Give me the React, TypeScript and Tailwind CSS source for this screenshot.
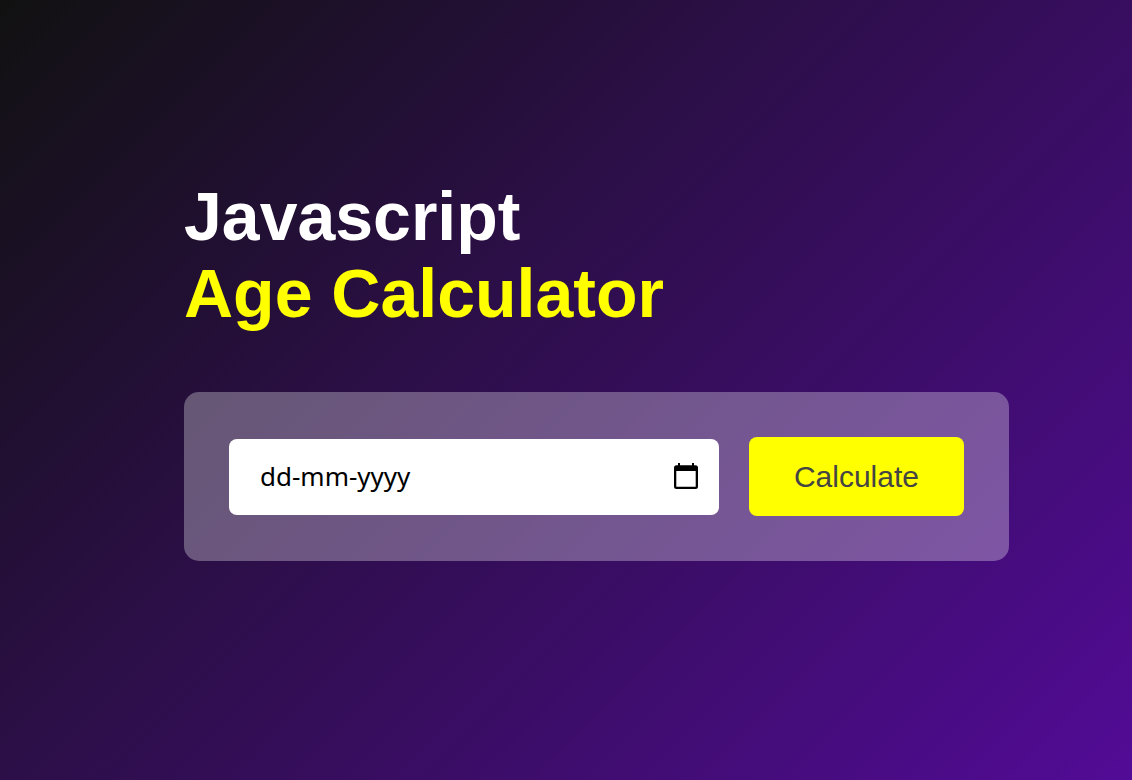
import { useState, type FormEvent } from "react";

function CalendarIcon() {
  return (
    <svg viewBox="0 0 24 26" className="h-[26px] w-6" aria-hidden="true">
      <path
        fill="currentColor"
        fillRule="evenodd"
        d="M4 0h2v2.200h12V0h2v2.200h1.500A2.500 2.500 0 0 1 24 4.700v18.800a2.500 2.500 0 0 1-2.500 2.500h-19A2.500 2.500 0 0 1 0 23.500V4.700a2.500 2.500 0 0 1 2.500-2.500H4zM2.300 8v15.700h19.400V8z"
      />
    </svg>
  );
}

export default function App() {
  const [date, setDate] = useState("");

  const handleSubmit = (event: FormEvent<HTMLFormElement>) => {
    event.preventDefault();
  };

  return (
    <main className="min-h-screen bg-linear-[135deg,#111111,#520b96] pt-[178px] pr-[123px] pb-16 pl-[184px] font-['Liberation_Sans',Arial,sans-serif]">
      <h1 className="text-[68px] leading-[77px] font-bold text-white">
        Javascript
        <br />
        <span className="text-[#ffff00]">Age Calculator</span>
      </h1>
      <form
        onSubmit={handleSubmit}
        className="mt-[60px] flex items-center gap-[30px] rounded-[15px] bg-white/30 p-[45px]"
      >
        <div className="flex h-[76px] min-w-0 flex-1 items-center rounded-lg bg-white pr-[21px] pb-0.5 pl-[31px] text-black">
          <input
            type="text"
            aria-label="Date of birth"
            placeholder="dd-mm-yyyy"
            value={date}
            onChange={(event) => setDate(event.target.value)}
            className="min-w-0 flex-1 bg-transparent font-['Noto_Sans',sans-serif] text-[26px] leading-9 outline-none placeholder:text-black"
          />
          <button type="button" aria-label="Open calendar" className="shrink-0">
            <CalendarIcon />
          </button>
        </div>
        <button
          type="submit"
          className="h-[79px] shrink-0 rounded-lg bg-[#ffff00] px-[45px] text-[30px] leading-9 text-[#444444]"
        >
          Calculate
        </button>
      </form>
    </main>
  );
}
